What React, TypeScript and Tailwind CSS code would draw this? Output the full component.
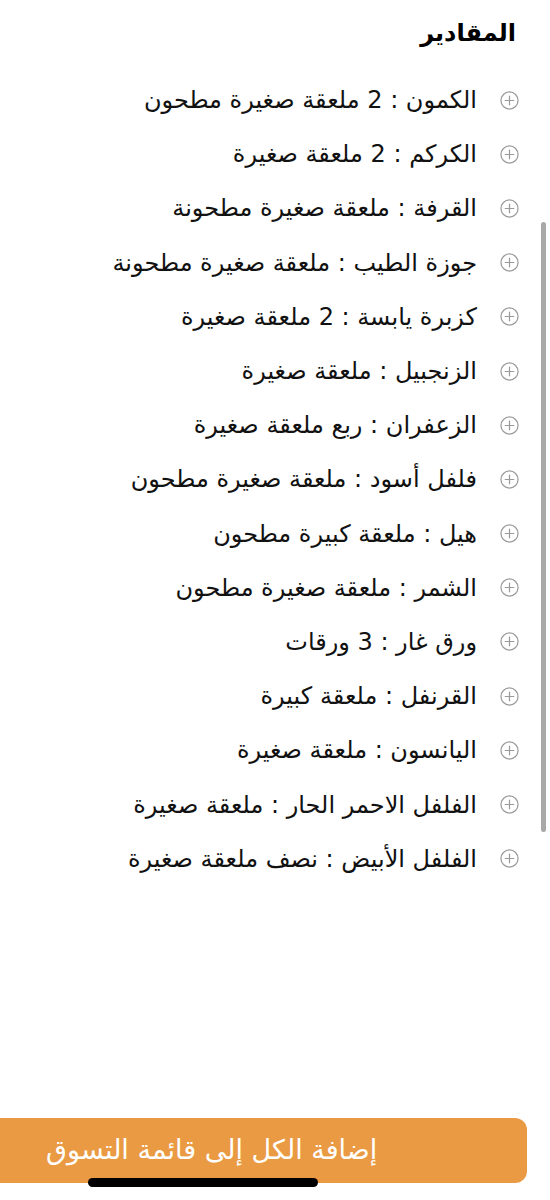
import React from 'react';

const items = [
  'الكمون : 2 ملعقة صغيرة مطحون',
  'الكركم : 2 ملعقة صغيرة',
  'القرفة : ملعقة صغيرة مطحونة',
  'جوزة الطيب : ملعقة صغيرة مطحونة',
  'كزبرة يابسة : 2 ملعقة صغيرة',
  'الزنجبيل : ملعقة صغيرة',
  'الزعفران : ربع ملعقة صغيرة',
  'فلفل أسود : ملعقة صغيرة مطحون',
  'هيل : ملعقة كبيرة مطحون',
  'الشمر : ملعقة صغيرة مطحون',
  'ورق غار : 3 ورقات',
  'القرنفل : ملعقة كبيرة',
  'اليانسون : ملعقة صغيرة',
  'الفلفل الاحمر الحار : ملعقة صغيرة',
  'الفلفل الأبيض : نصف ملعقة صغيرة',
];

const PlusCircle = () => (
  <svg width="19" height="19" viewBox="0 0 20 20" fill="none" stroke="#9a9a9a" strokeWidth="1.3" strokeLinecap="round" className="shrink-0">
    <circle cx="10" cy="10" r="9" />
    <path d="M10 5.5v9M5.5 10h9" />
  </svg>
);

export default function App() {
  return (
    <div
      dir="rtl"
      className="relative w-[550px] h-[1200px] bg-white overflow-hidden text-black"
      style={{ fontFamily: '"DejaVu Sans", "Noto Sans", sans-serif' }}
    >
      {/* scrollbar */}
      <div className="absolute right-[4px] top-[222px] w-[5px] h-[610px] rounded-full bg-[#a8a8a8]" />

      <div className="pr-[34px] pt-[16px]">
        <h2 className="text-[24px] font-bold leading-[34px]">المقادير</h2>
      </div>

      <ul className="pr-[31px] pt-[23px] flex flex-col">
        {items.map((t) => (
          <li key={t} className="h-[54.2px] flex items-center gap-[23px]">
            <PlusCircle />
            <span className="text-[24px] leading-none text-[#111] whitespace-nowrap">{t}</span>
          </li>
        ))}
      </ul>

      {/* bottom button */}
      <div className="absolute left-0 bottom-[17px] w-[527px] h-[65px] rounded-r-[12px] bg-[#e99a43] flex items-center pl-[46px]" dir="ltr">
        <span dir="rtl" className="text-white text-[27px]">إضافة الكل إلى قائمة التسوق</span>
      </div>
      <div className="absolute left-[88px] top-[1178px] w-[230px] h-[9px] rounded-full bg-black" />
    </div>
  );
}
